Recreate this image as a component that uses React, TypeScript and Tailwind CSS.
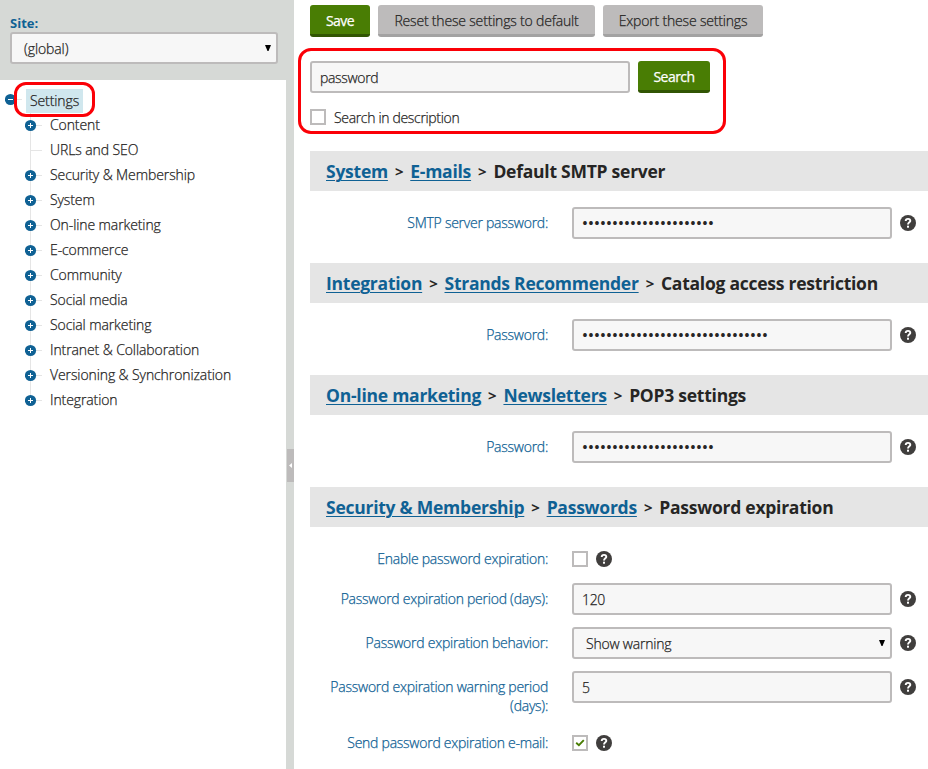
import type { ReactNode } from "react";

type TreeNode = { label: string; expandable: boolean };

const treeNodes: TreeNode[] = [
  { label: "Content", expandable: true },
  { label: "URLs and SEO", expandable: false },
  { label: "Security & Membership", expandable: true },
  { label: "System", expandable: true },
  { label: "On-line marketing", expandable: true },
  { label: "E-commerce", expandable: true },
  { label: "Community", expandable: true },
  { label: "Social media", expandable: true },
  { label: "Social marketing", expandable: true },
  { label: "Intranet & Collaboration", expandable: true },
  { label: "Versioning & Synchronization", expandable: true },
  { label: "Integration", expandable: true },
];

function TreeGutter({ expandable, last }: { expandable: boolean; last: boolean }) {
  return (
    <svg width="18" height="25" viewBox="0 0 18 25" className="block shrink-0">
      <path d={last ? "M5.5 0V12M5.5 12.5H17" : "M5.5 0V25M5.5 12.5H17"} stroke="#e5e5e5" fill="none" />
      {expandable && (
        <>
          <circle cx="5.5" cy="12.5" r="5.6" fill="#0f6194" />
          <path d="M3 12.5H8M5.5 10V15" stroke="#fff" fill="none" />
        </>
      )}
    </svg>
  );
}

function Arrow() {
  return (
    <svg width="6" height="6" viewBox="0 0 6 6" className="mb-px block shrink-0">
      <path d="M0 0H6L3.5 6H2.5Z" fill="#000" />
    </svg>
  );
}

function Help() {
  return (
    <svg width="16" height="16" viewBox="0 0 16 16" className="ml-2 block shrink-0">
      <circle cx="8" cy="8" r="8" fill="#403e3d" />
      <path d="M5.7 6.1C5.7 4.7 6.7 3.9 8 3.9S10.3 4.7 10.3 5.9C10.3 7.3 8 7.5 8 9.5" stroke="#fff" strokeWidth="1.9" fill="none" />
      <rect x="7" y="10.7" width="2" height="2" fill="#fff" />
    </svg>
  );
}

function Field({ children }: { children?: ReactNode }) {
  return (
    <div className="flex h-8 w-80 shrink-0 items-center rounded-[3px] border-2 border-[#bdbbbb] bg-[#f7f7f7] px-2">
      {children}
    </div>
  );
}

function Dots({ count }: { count: number }) {
  return (
    <span className="flex font-['Noto_Sans',sans-serif] text-[13px] leading-none font-bold tracking-normal [-webkit-text-stroke:0]">
      {Array.from({ length: count }, (_, i) => (
        <span key={i} className="flex w-[6px] justify-center">•</span>
      ))}
    </span>
  );
}

function Checkbox({ checked = false }: { checked?: boolean }) {
  return (
    <span className="flex size-4 shrink-0 items-center justify-center border-2 border-[#bdbbbb] bg-white">
      {checked && (
        <svg width="10" height="8" viewBox="0 0 10 8">
          <path d="M1.2 3.7L3.9 6.1L8.8 1.2" stroke="#497d04" strokeWidth="1.9" fill="none" />
        </svg>
      )}
    </span>
  );
}

function Section({ path, title }: { path: [string, string]; title: string }) {
  return (
    <h2 className="flex h-10 items-center gap-[7px] bg-[#e5e5e5] pt-px pl-4 text-[17.5px] font-bold tracking-[-0.25px] whitespace-nowrap [-webkit-text-stroke:0]">
      <a className="text-[#0f6194] underline decoration-1 underline-offset-2">{path[0]}</a>
      <span className="text-[15px]">&gt;</span>
      <a className="text-[#0f6194] underline decoration-1 underline-offset-2">{path[1]}</a>
      <span className="text-[15px]">&gt;</span>
      <span>{title}</span>
    </h2>
  );
}

function Row({ label, height, children }: { label: string; height: string; children: ReactNode }) {
  return (
    <div className={"flex items-start " + height}>
      <div className="mr-6 w-[238px] shrink-0 pt-[6px] pl-2 text-right leading-[19px] tracking-[-0.25px] text-[#0f6194]">{label}</div>
      <div className="flex h-8 items-center">{children}</div>
    </div>
  );
}

function GreyButton({ width, children }: { width: string; children: ReactNode }) {
  return (
    <button className={"flex h-8 items-center justify-center rounded-[3px] border-b-[3px] border-[#a3a2a2] bg-[#bdbbbb] pt-[2px] tracking-[-0.18px] whitespace-nowrap " + width}>
      {children}
    </button>
  );
}

function GreenButton({ width, children }: { width: string; children: ReactNode }) {
  return (
    <button className={"flex h-8 items-center justify-center rounded-[3px] border-b-[3px] border-[#315503] bg-[#497d04] pt-[2px] font-normal tracking-[-0.55px] text-white " + width}>
      {children}
    </button>
  );
}

export default function App() {
  return (
    <div className="relative flex h-[769px] w-[928px] overflow-hidden bg-white font-['Open_Sans',sans-serif] text-[14px] font-light tracking-[-0.33px] text-[#262524] [-webkit-text-stroke:0.25px]">
      <aside className="flex w-[294px] shrink-0 flex-col">
        <div className="h-20 bg-[#d6d9d6] pt-[14px] pl-[10px]">
          <div className="text-[13px] leading-[18px] font-bold tracking-normal text-[#0f6194] [-webkit-text-stroke:0]">Site:</div>
          <div className="flex h-8 w-[268px] items-center justify-between rounded-[3px] border-2 border-[#bdbbbb] bg-[#f7f7f7] pr-[5px] pl-3">
            <span className="pt-px tracking-[-0.1px]">(global)</span>
            <Arrow />
          </div>
        </div>
        <div className="flex flex-1">
          <div className="w-[286px] pt-2 tracking-[-0.1px]">
            <div className="flex h-[25px] items-center pl-[5px]">
              <svg width="17" height="25" viewBox="0 0 17 25" className="block">
                <path d="M11 11.5H17" stroke="#e5e5e5" />
                <circle cx="5.5" cy="11.5" r="5.6" fill="#0f6194" />
                <path d="M3 11.5H8" stroke="#fff" />
              </svg>
              <span className="ml-1 flex h-6 w-[57px] items-center justify-center bg-[#d0e7ee] pb-px">Settings</span>
            </div>
            <div className="pl-[25px]">
              {treeNodes.map((n, i) => (
                <div key={n.label} className="flex h-[25px] items-center">
                  <TreeGutter expandable={n.expandable} last={i === treeNodes.length - 1} />
                  <span className="mb-[2px] ml-[7px] whitespace-nowrap">{n.label}</span>
                </div>
              ))}
            </div>
          </div>
          <div className="w-2 bg-[#d6d9d6] pt-[369px] pl-px">
            <div className="flex h-[33px] w-[7px] items-center justify-center bg-[#bdbbbb]">
              <svg width="3" height="5" viewBox="0 0 3 5"><path d="M3 0V5L0 2.5Z" fill="#fff" /></svg>
            </div>
          </div>
        </div>
      </aside>

      <main className="flex w-[634px] flex-col pt-[5px] pl-4">
        <div className="flex gap-2">
          <GreenButton width="w-[60px]">Save</GreenButton>
          <GreyButton width="w-[217px]">Reset these settings to default</GreyButton>
          <GreyButton width="w-[160px]">Export these settings</GreyButton>
        </div>
        <div className="mt-6 flex gap-2">
          <Field>password</Field>
          <GreenButton width="w-[72px]">Search</GreenButton>
        </div>
        <div className="mt-4 mb-[26px] flex h-4 items-center gap-2">
          <Checkbox />
          <span>Search in description</span>
        </div>

        <Section path={["System", "E-mails"]} title="Default SMTP server" />
        <div className="h-4" />
        <Row label="SMTP server password:" height="h-14"><Field><Dots count={22} /></Field><Help /></Row>

        <Section path={["Integration", "Strands Recommender"]} title="Catalog access restriction" />
        <div className="h-4" />
        <Row label="Password:" height="h-14"><Field><Dots count={31} /></Field><Help /></Row>

        <Section path={["On-line marketing", "Newsletters"]} title="POP3 settings" />
        <div className="h-4" />
        <Row label="Password:" height="h-14"><Field><Dots count={22} /></Field><Help /></Row>

        <Section path={["Security & Membership", "Passwords"]} title="Password expiration" />
        <div className="h-4" />
        <Row label="Enable password expiration:" height="h-10"><Checkbox /><Help /></Row>
        <Row label="Password expiration period (days):" height="h-11"><Field>120</Field><Help /></Row>
        <Row label="Password expiration behavior:" height="h-11">
          <Field>
            <span className="-mr-[3px] flex flex-1 items-center justify-between pl-1"><span className="pt-px tracking-[-0.2px]">Show warning</span><Arrow /></span>
          </Field>
          <Help />
        </Row>
        <Row label="Password expiration warning period (days):" height="h-14"><Field>5</Field><Help /></Row>
        <Row label="Send password expiration e-mail:" height="h-8"><Checkbox checked /><Help /></Row>
      </main>

      <div className="pointer-events-none absolute top-[82px] left-[14px] h-[35px] w-[81px] rounded-[12px] border-[3px] border-[#fb0007]" />
      <div className="pointer-events-none absolute top-[48px] left-[298px] h-[86px] w-[428px] rounded-[13px] border-[3px] border-[#fb0007]" />
    </div>
  );
}
